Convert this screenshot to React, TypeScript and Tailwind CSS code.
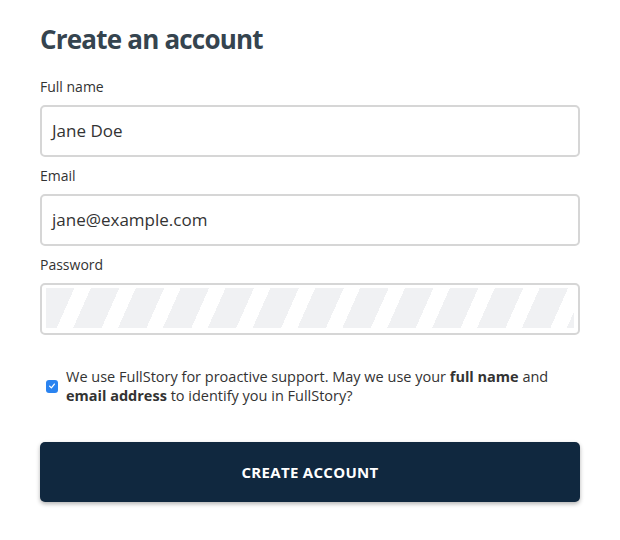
export default function App() {
  return (
    <div className="min-h-screen bg-white font-['Open_Sans',sans-serif] text-[#333]">
      <form className="w-[540px] ml-[40px] pt-[21px]">
        <h1 className="text-[26px] font-bold leading-[36px] text-[#35444f] tracking-[-0.8px]">Create an account</h1>

        <label className="block mt-[20px] text-[14px] leading-[20px]">Full name</label>
        <div className="mt-[8px] h-[52px] rounded-[5px] border-2 border-[#d6d6d6] px-[10px] flex items-center text-[17px]">
          Jane Doe
        </div>

        <label className="block mt-[9px] text-[14px] leading-[20px]">Email</label>
        <div className="mt-[8px] h-[52px] rounded-[5px] border-2 border-[#d6d6d6] px-[10px] flex items-center text-[17px]">
          jane@example.com
        </div>

        <label className="block mt-[9px] text-[14px] leading-[20px]">Password</label>
        <div className="mt-[8px] h-[52px] rounded-[5px] border-2 border-[#d6d6d6] pt-[3px] pb-[5px] px-[4px]">
          <div className="h-full bg-[repeating-linear-gradient(114deg,#f0f1f3_0px,#f0f1f3_26px,#ffffff_26px,#ffffff_41px)]" />
        </div>

        <div className="mt-[32px] flex items-center gap-[8px]">
          <span className="ml-[6px] w-[12px] h-[13px] rounded-[3px] bg-[#2a83f0] flex items-center justify-center shrink-0">
            <svg width="8" height="8" viewBox="0 0 10 10" fill="none">
              <path d="M2 5.2 L4.2 7.4 L8 2.6" stroke="white" strokeWidth="1.6" strokeLinecap="round" strokeLinejoin="round" />
            </svg>
          </span>
          <p className="text-[14.5px] leading-[19px]">
            We use FullStory for proactive support. May we use your <b>full name</b> and <b>email address</b> to identify you in FullStory?
          </p>
        </div>

        <button
          type="button"
          className="mt-[37px] w-full h-[60px] rounded-[5px] bg-[#10283f] text-white text-[15px] font-bold tracking-[0.3px] shadow-[0_2px_4px_rgba(0,0,0,0.3)]"
        >
          CREATE ACCOUNT
        </button>
      </form>
    </div>
  );
}
